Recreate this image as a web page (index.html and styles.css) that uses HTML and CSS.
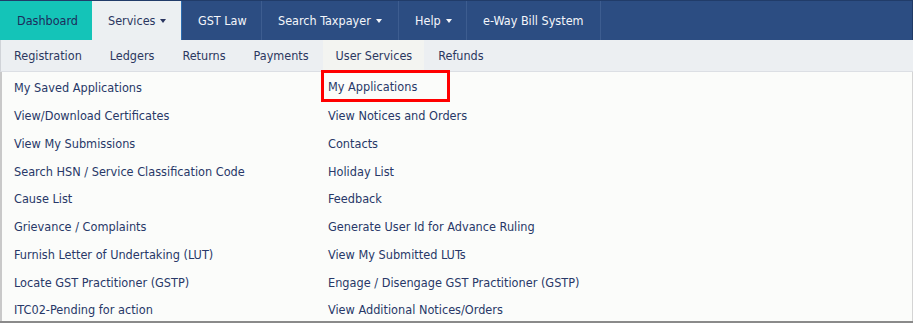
FILE: index.html
```html
<!DOCTYPE html>
<html>
<head>
<meta charset="utf-8">
<link rel="stylesheet" href="styles.css">
</head>
<body>
<div class="page">
  <nav class="topnav">
    <a class="top-item dash">Dashboard</a>
    <a class="top-item services">Services <span class="caret"></span></a>
    <a class="top-item">GST Law</a>
    <a class="top-item">Search Taxpayer <span class="caret"></span></a>
    <a class="top-item">Help <span class="caret"></span></a>
    <a class="top-item">e-Way Bill System</a>
  </nav>
  <nav class="subnav">
    <a class="sub-item">Registration</a>
    <a class="sub-item">Ledgers</a>
    <a class="sub-item">Returns</a>
    <a class="sub-item">Payments</a>
    <a class="sub-item active">User Services</a>
    <a class="sub-item">Refunds</a>
  </nav>
  <div class="menu">
    <a class="link">My Saved Applications</a>
    <a class="link highlight">My Applications</a>
    <a class="link">View/Download Certificates</a>
    <a class="link">View Notices and Orders</a>
    <a class="link">View My Submissions</a>
    <a class="link">Contacts</a>
    <a class="link">Search HSN / Service Classification Code</a>
    <a class="link">Holiday List</a>
    <a class="link">Cause List</a>
    <a class="link">Feedback</a>
    <a class="link">Grievance / Complaints</a>
    <a class="link">Generate User Id for Advance Ruling</a>
    <a class="link">Furnish Letter of Undertaking (LUT)</a>
    <a class="link">View My Submitted LUTs</a>
    <a class="link">Locate GST Practitioner (GSTP)</a>
    <a class="link">Engage / Disengage GST Practitioner (GSTP)</a>
    <a class="link">ITC02-Pending for action</a>
    <a class="link">View Additional Notices/Orders</a>
  </div>
</div>
</body>
</html>
```

FILE: styles.css
```css
* { box-sizing: border-box; }
html, body { margin: 0; padding: 0; background: #ffffff; }
body {
  font-family: "DejaVu Sans Condensed", "DejaVu Sans", sans-serif;
  font-size: 12px;
}
.page {
  width: 913px;
  height: 323px;
  display: flex;
  flex-direction: column;
  background: #fbfcfa;
  border-bottom: 2px solid #8a8a8a;
  overflow: hidden;
}
.topnav {
  display: flex;
  height: 40px;
  flex-shrink: 0;
  background: #2c4d82;
  border-top: 1px solid #213c69;
  border-right: 1px solid #203a66;
}
.top-item {
  display: flex;
  align-items: center;
  gap: 5px;
  padding: 0 16px 0 16px;
  color: #f4f6fa;
  font-size: 12.5px;
  border-right: 1px solid #3d5d90;
  white-space: nowrap;
}
.top-item.dash {
  background: #14c4b8;
  color: #1d2c5c;
  width: 92px;
  padding-left: 17px;
  border-right: 1px solid #14c4b8;
}
.top-item.services {
  background: #ecf0f2;
  color: #2a3660;
  width: 90px;
  border-right: 1px solid #2c6cb0;
}
.top-item:nth-child(3) { width: 80px; }
.top-item:nth-child(4) { width: 137px; }
.top-item:nth-child(5) { width: 68px; }
.top-item:nth-child(6) { width: 134px; }
.caret {
  width: 0;
  height: 0;
  border-left: 3.5px solid transparent;
  border-right: 3.5px solid transparent;
  border-top: 4px solid currentColor;
  margin-top: 1px;
}
.subnav {
  display: flex;
  height: 32px;
  flex-shrink: 0;
  background: #eceff2;
  border-bottom: 1px solid #dcdfe4;
  border-left: 1px solid #d0d3d8;
}
.sub-item {
  display: flex;
  align-items: center;
  padding: 0 14px 0 14px;
  color: #2b3760;
  font-size: 12.5px;
}
.sub-item:first-child { padding-left: 13px; }
.sub-item.active {
  background: #f3f4f1;
  padding: 0 12px 0 13px;
}
.menu {
  flex: 1;
  display: grid;
  grid-template-columns: 314px 1fr;
  grid-auto-rows: 27.75px;
  align-content: start;
  border-left: 2px solid #c9c9c9;
  border-right: 1px solid #d4d4d4;
  padding: 2px 0 0 12px;
}
.link {
  display: flex;
  align-items: center;
  color: #283868;
  font-size: 12.6px;
  white-space: nowrap;
}
.link.highlight {
  justify-self: start;
  margin-left: -7px;
  padding: 0 4px 0 4px;
  width: 129px;
  height: 32px;
  margin-top: -4px;
  border: 3px solid #ff0000;
}
```
